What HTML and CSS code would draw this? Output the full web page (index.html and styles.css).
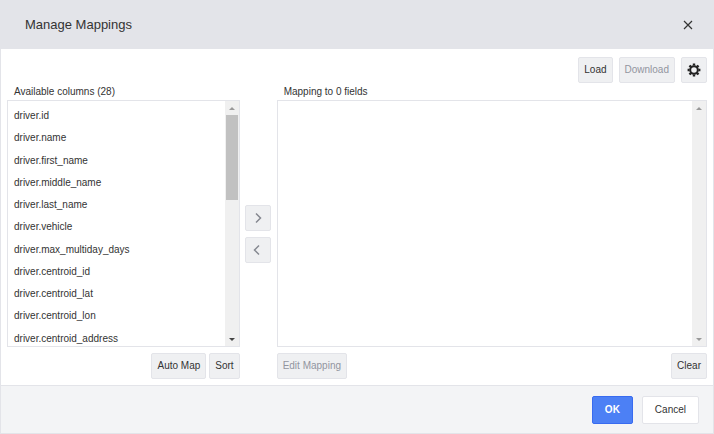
FILE: index.html
```html
<!DOCTYPE html>
<html lang="en">
<head>
  <meta charset="UTF-8" />
  <title>Manage Mappings</title>
  <meta name="viewport" content="width=device-width, initial-scale=1.0" />
  <link rel="stylesheet" href="styles.css">
</head>
<body>

  <main class="dialog">
    <header class="dialog-header">
      <h1>Manage Mappings</h1>
      <button class="close" type="button" aria-label="Close">
        <svg width="10" height="10" viewBox="0 0 10 10"><path d="M1 1l8 8M9 1l-8 8" /></svg>
      </button>
    </header>

    <div class="dialog-body">
      <div class="toolbar">
        <button class="btn" type="button">Load</button>
        <button class="btn" type="button" disabled>Download</button>
        <button class="btn btn-icon gear" type="button" aria-label="Settings">
          <svg width="14" height="14" viewBox="0 0 14 14">
            <circle cx="7" cy="7" r="3.8" fill="none" stroke="#222" stroke-width="2" />
            <path d="M7 .6v2M7 11.4v2M.6 7h2M11.4 7h2M2.5 2.5l1.4 1.4M10.1 10.1l1.4 1.4M2.5 11.5l1.4-1.4M10.1 3.9l1.4-1.4" fill="none" stroke="#222" stroke-width="2.4" />
          </svg>
        </button>
      </div>

      <div class="columns">
        <section class="panel">
          <h2 id="available-title">Available columns (28)</h2>
          <div class="listbox">
            <ul class="items" aria-labelledby="available-title">
              <li>driver.id</li>
              <li>driver.name</li>
              <li>driver.first_name</li>
              <li>driver.middle_name</li>
              <li>driver.last_name</li>
              <li>driver.vehicle</li>
              <li>driver.max_multiday_days</li>
              <li>driver.centroid_id</li>
              <li>driver.centroid_lat</li>
              <li>driver.centroid_lon</li>
              <li>driver.centroid_address</li>
            </ul>
            <div class="scrollbar" aria-hidden="true">
              <span class="arrow up"></span>
              <div class="track"><div class="thumb"></div></div>
              <span class="arrow down active"></span>
            </div>
          </div>
          <div class="actions actions-end">
            <button class="btn" type="button">Auto Map</button>
            <button class="btn" type="button">Sort</button>
          </div>
        </section>

        <div class="movers">
          <button class="btn btn-icon" type="button" aria-label="Add to mapping" disabled>
            <svg width="10" height="12" viewBox="0 0 10 12"><path d="M3 1.5L7.5 6 3 10.5" /></svg>
          </button>
          <button class="btn btn-icon" type="button" aria-label="Remove from mapping" disabled>
            <svg width="10" height="12" viewBox="0 0 10 12"><path d="M6 1.5L1.5 6 6 10.5" /></svg>
          </button>
        </div>

        <section class="panel">
          <h2 id="mapping-title">Mapping to 0 fields</h2>
          <div class="listbox">
            <ul class="items" aria-labelledby="mapping-title"></ul>
            <div class="scrollbar" aria-hidden="true">
              <span class="arrow up"></span>
              <div class="track"></div>
              <span class="arrow down"></span>
            </div>
          </div>
          <div class="actions">
            <button class="btn" type="button" disabled>Edit Mapping</button>
            <button class="btn" type="button">Clear</button>
          </div>
        </section>
      </div>
    </div>

    <footer class="dialog-footer">
      <button class="footer-btn primary" type="button">OK</button>
      <button class="footer-btn" type="button">Cancel</button>
    </footer>
  </main>

</body>
</html>
```

FILE: styles.css
```css
* {
  box-sizing: border-box;
}

body {
  margin: 0;
  font-family: "Liberation Sans", Arial, sans-serif;
  font-size: 10px;
  line-height: 16px;
  color: #333;
}

h1,
h2 {
  margin: 0;
  font-weight: normal;
}

button {
  font: inherit;
  color: inherit;
  cursor: pointer;
}

.dialog {
  display: flex;
  flex-direction: column;
  height: 100vh;
  min-height: 320px;
  border: 1px solid #e3e4e9;
  border-top: 0;
  background: #fff;
}

.dialog-header {
  display: flex;
  align-items: center;
  justify-content: space-between;
  padding: 0 16px 0 24px;
  height: 49px;
  background: #e3e4e9;
}

.dialog-header h1 {
  font-size: 13px;
}

.close {
  display: flex;
  align-items: center;
  justify-content: center;
  width: 18px;
  height: 18px;
  padding: 0;
  border: 0;
  background: none;
}

.close svg {
  fill: none;
  stroke: #333;
  stroke-width: 1.2;
}

.dialog-body {
  display: flex;
  flex: 1;
  flex-direction: column;
  min-height: 0;
  padding: 8px 6px 6px;
}

.toolbar {
  display: flex;
  justify-content: flex-end;
  gap: 6px;
}

.btn {
  display: flex;
  align-items: center;
  justify-content: center;
  height: 26px;
  padding: 0 5px;
  border: 1px solid #e3e4e9;
  border-radius: 2px;
  background: #eff0f2;
  white-space: nowrap;
}

.btn:disabled {
  color: #92959f;
  cursor: default;
}

.btn-icon {
  width: 26px;
  padding: 0;
}

.columns {
  display: grid;
  flex: 1;
  grid-template-columns: 233fr 37px 431fr;
  min-height: 0;
}

.panel {
  display: flex;
  flex-direction: column;
  min-width: 0;
  min-height: 0;
}

.panel h2 {
  padding: 1px 7px 0;
  font-size: 10px;
}

.listbox {
  display: flex;
  flex: 1;
  min-height: 0;
  border: 1px solid #e3e4e9;
}

.items {
  display: grid;
  flex: 1;
  grid-auto-rows: calc(100% / 11);
  min-height: 0;
  margin: 0;
  padding: 0 6px;
  overflow: hidden;
  list-style: none;
}

.items li {
  padding-top: 7px;
}

.scrollbar {
  display: flex;
  flex-direction: column;
  width: 14px;
  background: #f0f0f0;
}

.arrow {
  display: flex;
  align-items: center;
  justify-content: center;
  height: 14px;
}

.arrow::before {
  content: "";
  border: 3px solid transparent;
}

.up::before {
  border-top: 0;
  border-bottom-color: #999;
}

.down::before {
  border-top-color: #999;
  border-bottom: 0;
}

.down.active::before {
  border-top-color: #444;
}

.track {
  flex: 1;
  padding: 0 1px;
}

.thumb {
  height: 39%;
  background: #c1c1c1;
}

.actions {
  display: flex;
  justify-content: space-between;
  gap: 3px;
  padding: 6px 0 0;
}

.actions-end {
  justify-content: flex-end;
}

.movers {
  display: flex;
  flex-direction: column;
  align-items: center;
  justify-content: center;
  gap: 6px;
  padding-top: 5px;
}

.movers svg {
  fill: none;
  stroke: #858891;
  stroke-width: 1.5;
}

.dialog-footer {
  display: flex;
  align-items: center;
  justify-content: flex-end;
  gap: 9px;
  height: 48px;
  padding: 0 14px;
  border-top: 1px solid #e3e4e9;
  background: #f3f4f6;
}

.footer-btn {
  height: 28px;
  padding: 0 12px;
  border: 1px solid #e3e4e9;
  border-radius: 2px;
  background: #fff;
}

.primary {
  border-color: #386bf0;
  background: #4c80f5;
  color: #fff;
  font-weight: bold;
}
```
